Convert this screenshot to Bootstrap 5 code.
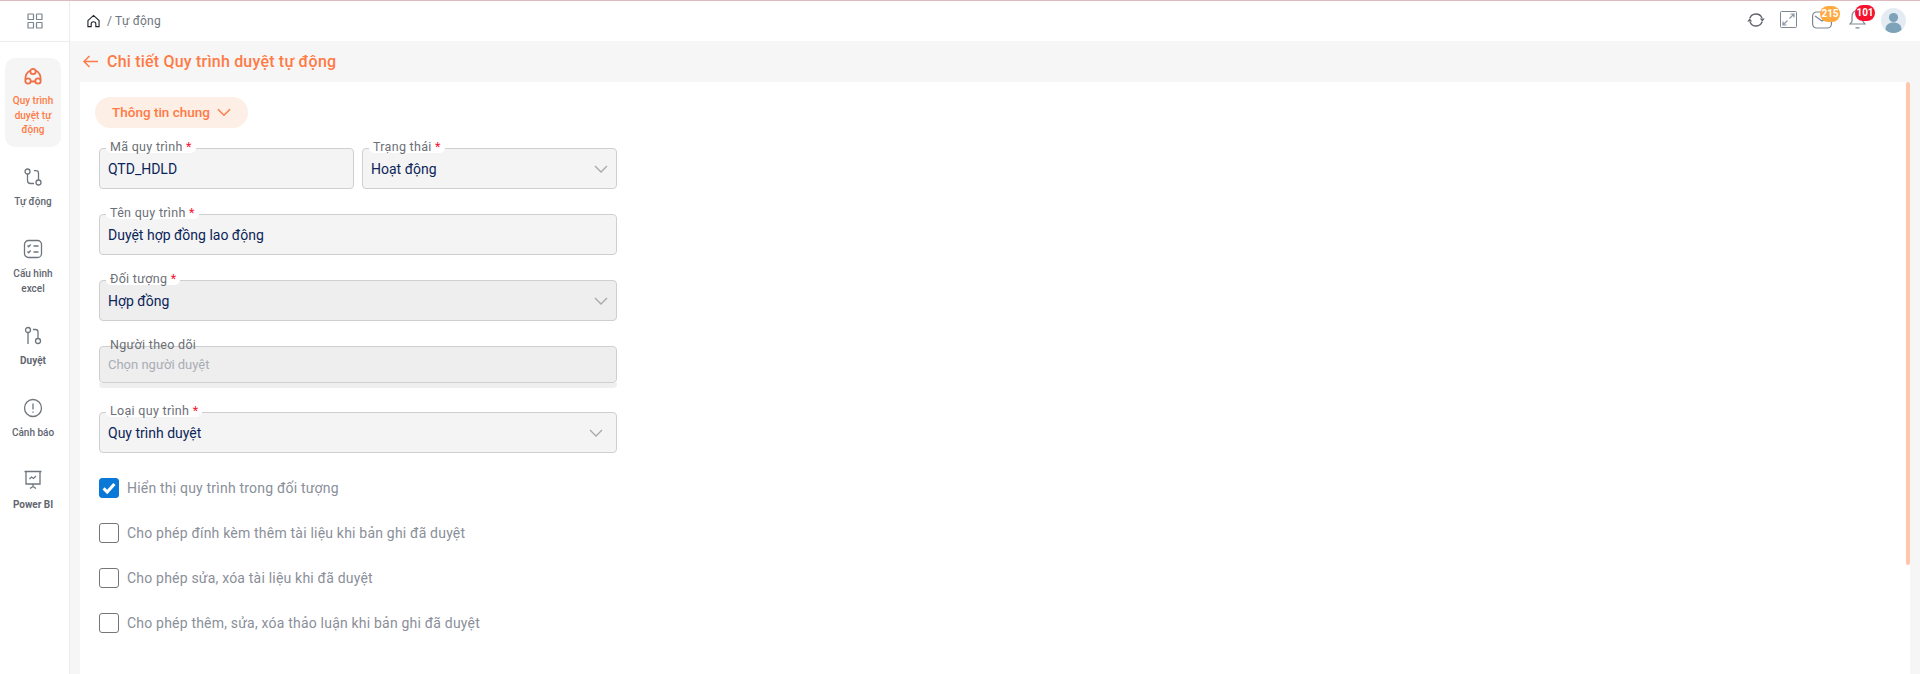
<!DOCTYPE html>
<html lang="vi">
<head>
<meta charset="utf-8">
<title>Chi tiết Quy trình duyệt tự động</title>
<link href="https://cdn.jsdelivr.net/npm/bootstrap@5.3.0/dist/css/bootstrap.min.css" rel="stylesheet">
<style>
html,body{height:674px;overflow:hidden}
body{font-family:Roboto,"Liberation Sans",sans-serif;font-size:14px;background:#fff;border-top:1px solid #dcbcc0}
.app-shell{height:673px}
.side-rail{width:70px;flex:none;border-right:1px solid #ececec;background:#fff}
.rail-top{height:41px;flex:none;border-bottom:1px solid #ececec}
.rail-nav{padding:16px 8px 0 5px;gap:12px}
.rail-item{width:56px;padding:8px 0 9.5px;border-radius:10px;color:#5f6670;font-size:10px;line-height:14.5px;font-weight:500;text-align:center;text-decoration:none}
.rail-item svg{display:block;width:20px;height:20px;margin-bottom:8px}
.rail-item.on{background:#f5f5f5;color:#ff7a45}
.rail-item .strong-lbl{font-weight:700}
.top-strip{height:40px;flex:none;padding:0 14px 3px 17px}
.crumb{font-size:12px;color:#6f7680;letter-spacing:.2px;gap:7px;margin-top:3px}
.head-icon{display:block;color:#6e7a86}
.icon-wrap{position:relative;display:block}
.gap-a{margin-left:15px}
.gap-b{margin-left:17px}
.count-pill{position:absolute;height:16px;min-width:20px;border-radius:8px;color:#fff;font-size:10px;font-weight:700;line-height:16px;text-align:center}
.pill-mail{background:#ffa940;left:8px;top:-5px}
.pill-bell{background:#f5122e;left:6px;top:-4px}
.avatar-dot{width:25px;height:25px;border-radius:50%;background:#e4ebf2;overflow:hidden;margin-top:2px}
.work-area{background:#f6f6f6;min-width:0}
.title-strip{height:41px;flex:none;padding:0 0 0 13px;color:#ff7a45;font-size:16px;font-weight:500;gap:9px;letter-spacing:.2px}
.sheet{background:#fff;margin:0 10px;position:relative;padding:15px 0 0 15px}
.scroll-thumb{position:absolute;right:0;top:0;width:4px;height:483px;border-radius:2px;background:#ffc6ab}
.group-pill{width:153px;height:31px;border-radius:16px;background:#fdeee6;color:#ff7a45;font-size:13.5px;font-weight:500;gap:7px}
.form-col{width:518px;margin:20px 0 0 4px}
.field-row{gap:8px;margin-bottom:25px}
.float-field{position:relative;flex:1 1 0;min-width:0}
.float-field .form-control,.float-field .form-select{height:41px;border:1px solid #cfcfcf;border-radius:4px;background-color:#f4f4f4;color:#0b2559;font-size:14px;padding:1px 8px 0 8px;box-shadow:none}
.float-field .form-select{background-position:right 7px center;background-size:16px 12px;background-image:url("data:image/svg+xml,%3csvg xmlns='http://www.w3.org/2000/svg' viewBox='0 0 16 12'%3e%3cpath fill='none' stroke='%23a8a8a8' stroke-width='1.3' d='M2 3l6 6 6-6'/%3e%3c/svg%3e")}
.float-field .form-select.far-in{background-position:right 12px center}
.float-field .form-control.dim,.float-field .form-select.dim{background-color:#eeeeee;opacity:1}
.float-field .form-control.short{height:37px;padding-top:0;font-size:13px}
.float-field .form-control.short::placeholder{color:#a8adb5}
.under-shadow{height:5px;margin-bottom:24px;background:#efefef;border-radius:0 0 4px 4px}
.float-label{position:absolute;left:7px;top:-7px;padding:0 4px;height:12px;line-height:12px;font-size:12.5px;letter-spacing:.3px;color:#6b6f76;background:#fff;border-radius:0 0 5px 5px;margin:0}
.float-label.flat{background:linear-gradient(#fff 7px,transparent 7px)}
.req{color:#f5122e}
.opt-row{height:45px;margin:0;padding:0;min-height:0;gap:8px}
.opt-row .form-check-input{float:none;width:20px;height:20px;margin:0;border:1px solid #767676;border-radius:3px;flex:none;box-shadow:none;opacity:1}
.opt-row .form-check-input:checked{background-color:#0a78d6;border-color:#0a78d6;background-image:url("data:image/svg+xml,%3csvg xmlns='http://www.w3.org/2000/svg' viewBox='0 0 20 20'%3e%3cpath fill='none' stroke='%23fff' stroke-width='3.4' d='M4 10.500l4 4 8-9'/%3e%3c/svg%3e")}
.opt-row .form-check-label{color:#8a8f99;font-size:14px;letter-spacing:.2px}
</style>
</head>
<body>
<div class="app-shell d-flex">
  <aside class="side-rail d-flex flex-column">
    <div class="rail-top d-flex align-items-center justify-content-center">
      <svg width="16" height="16" viewBox="0 0 16 16" fill="none" stroke="#7b838c" stroke-width="1.2"><rect x="1" y="1" width="5.5" height="5.5" rx=".6"/><rect x="9.5" y="1" width="5.5" height="5.5" rx=".6"/><rect x="1" y="9.5" width="5.5" height="5.5" rx=".6"/><rect x="9.5" y="9.5" width="5.5" height="5.5" rx=".6"/></svg>
    </div>
    <nav class="rail-nav d-flex flex-column">
      <a class="rail-item on d-flex flex-column align-items-center" href="#">
        <svg viewBox="0 0 20 20" fill="none" stroke="#ef7048" stroke-width="1.800"><circle cx="10" cy="5.500" r="2.700"/><circle cx="5" cy="15" r="2.700"/><circle cx="15" cy="15" r="2.700"/><path d="M7.500 4.500C4.200 6 2.300 9 2.300 13.500M12.500 4.500c3.300 1.500 5.200 4.500 5.200 9M7.700 15.500h4.600"/></svg>
        <span>Quy trình duyệt tự động</span>
      </a>
      <a class="rail-item d-flex flex-column align-items-center" href="#">
        <svg viewBox="0 0 20 20" fill="none" stroke="#6e757d" stroke-width="1.3"><circle cx="4.5" cy="4.5" r="2.5"/><circle cx="15.5" cy="15.5" r="2.5"/><path d="M4.5 7v6.5c0 2 1.2 3 3 3h3.5M15.500 13V6c0-1.500-.8-2.300-2.300-2.300H11"/></svg>
        <span>Tự động</span>
      </a>
      <a class="rail-item d-flex flex-column align-items-center" href="#">
        <svg viewBox="0 0 20 20" fill="none" stroke="#6e757d" stroke-width="1.3"><rect x="1.500" y="1.500" width="17" height="17" rx="4"/><path d="M4.500 6.500l1.200 1.200 2-2.200M4.500 12.500l1.200 1.200 2-2.200M10.500 7h5M10.500 13h5"/></svg>
        <span>Cấu hình excel</span>
      </a>
      <a class="rail-item d-flex flex-column align-items-center" href="#">
        <svg viewBox="0 0 20 20" fill="none" stroke="#6e757d" stroke-width="1.3"><circle cx="5" cy="4" r="2.500"/><circle cx="15" cy="15" r="2.500"/><path d="M5 6.500V18M15 12.500V6c0-1.800-1-2.500-2.500-2.500H10"/></svg>
        <span class="strong-lbl">Duyệt</span>
      </a>
      <a class="rail-item d-flex flex-column align-items-center" href="#">
        <svg viewBox="0 0 20 20" fill="none" stroke="#6e757d" stroke-width="1.3"><circle cx="10" cy="10" r="8.500"/><path d="M10 5.500v6M10 13.500v1.300"/></svg>
        <span>Cảnh báo</span>
      </a>
      <a class="rail-item d-flex flex-column align-items-center" href="#">
        <svg viewBox="0 0 20 20" fill="none" stroke="#6e757d" stroke-width="1.3"><path d="M1.500 1.500h17M3 1.500v12.500h14V1.500M10 14v2.500M7 18.500l3-2 3 2M6.500 9l2-2 2 1.500 2.500-2.500"/></svg>
        <span class="strong-lbl">Power BI</span>
      </a>
    </nav>
  </aside>
  <div class="flex-grow-1 d-flex flex-column work-area">
    <header class="top-strip bg-white d-flex align-items-center justify-content-between">
      <div class="d-flex align-items-center crumb">
        <svg width="13" height="14" viewBox="0 0 14 14" fill="none" stroke="#1f2329" stroke-width="1.200"><path d="M1 6.500L7 1l6 5.500V13H9.500V10c0-3-5-3-5 0v3H1z"/></svg>
        <span>/ Tự động</span>
      </div>
      <div class="d-flex align-items-center">
        <svg class="head-icon" width="18" height="18" viewBox="0 0 18 18" fill="none" stroke="#5f646a" stroke-width="1.300"><path d="M2.800 7.500A6.500 6.500 0 0 1 15 7M15.200 10.500A6.500 6.500 0 0 1 3 11"/><path d="M12.800 7.500h5L15.300 10.500zM5.200 10.500h-5L2.700 7.500z" fill="#5f646a" stroke="none"/></svg>
        <svg class="head-icon gap-a" width="17" height="17" viewBox="0 0 17 17" fill="none" stroke="#7c8792" stroke-width="1"><rect x=".5" y=".5" width="16" height="16" rx="1"/><path d="M9.500 7.500L14 3M10.500 3H14V6.500M7.500 9.500L3 14M6.500 14H3V10.500" stroke="#8b97a3" stroke-width="1.200"/></svg>
        <span class="icon-wrap gap-a" style="width:20px;height:18px">
          <svg class="head-icon" width="20" height="18" viewBox="0 0 20 18" fill="none" stroke="#7c8792" stroke-width="1.200"><rect x=".6" y="1" width="18.800" height="16" rx="4"/><path d="M3 5l7 5 7-5"/></svg>
          <span class="count-pill pill-mail">215</span>
        </span>
        <span class="icon-wrap gap-b" style="width:17px;height:21px">
          <svg class="head-icon" width="17" height="21" viewBox="0 0 17 21" fill="none" stroke="#7c8792" stroke-width="1.200"><path d="M8.500 1.500C5 1.500 3 4 3 8v4.500l-2 2.500h15l-2-2.500V8c0-4-2-6.500-5.500-6.500zM6.500 18.800h4"/></svg>
          <span class="count-pill pill-bell">101</span>
        </span>
        <span class="avatar-dot gap-a d-block">
          <svg width="25" height="25" viewBox="0 0 25 25" class="d-block"><circle cx="12.500" cy="9.500" r="4.600" fill="#7ea3b8"/><path d="M4.500 22c0-5.500 3.500-7.500 8-7.500s8 2 8 7.500v3h-16z" fill="#7ea3b8"/></svg>
        </span>
      </div>
    </header>
    <div class="title-strip d-flex align-items-center">
      <svg width="15" height="13" viewBox="0 0 15 13" fill="none" stroke="#ff7a45" stroke-width="1.500"><path d="M15 6.500H1.500M6.500 1L1 6.500 6.500 12"/></svg>
      <span>Chi tiết Quy trình duyệt tự động</span>
    </div>
    <main class="sheet flex-grow-1">
      <div class="scroll-thumb"></div>
      <div class="group-pill d-flex align-items-center justify-content-center">
        <span>Thông tin chung</span>
        <svg width="14" height="9" viewBox="0 0 14 9" fill="none" stroke="#ff7a45" stroke-width="1.500"><path d="M1 1.200l6 6 6-6"/></svg>
      </div>
      <form class="form-col">
        <div class="field-row d-flex">
          <div class="float-field">
            <label class="float-label">Mã quy trình <span class="req">*</span></label>
            <input class="form-control" value="QTD_HDLD">
          </div>
          <div class="float-field">
            <label class="float-label">Trạng thái <span class="req">*</span></label>
            <select class="form-select"><option>Hoạt động</option></select>
          </div>
        </div>
        <div class="field-row d-flex">
          <div class="float-field">
            <label class="float-label">Tên quy trình <span class="req">*</span></label>
            <input class="form-control" value="Duyệt hợp đồng lao động">
          </div>
        </div>
        <div class="field-row d-flex">
          <div class="float-field">
            <label class="float-label">Đối tượng <span class="req">*</span></label>
            <select class="form-select dim"><option>Hợp đồng</option></select>
          </div>
        </div>
        <div class="d-flex">
          <div class="float-field">
            <label class="float-label flat">Người theo dõi</label>
            <input class="form-control dim short" placeholder="Chọn người duyệt">
          </div>
        </div>
        <div class="under-shadow"></div>
        <div class="field-row d-flex">
          <div class="float-field">
            <label class="float-label">Loại quy trình <span class="req">*</span></label>
            <select class="form-select far-in"><option>Quy trình duyệt</option></select>
          </div>
        </div>
        <div>
          <div class="form-check opt-row d-flex align-items-start">
            <input class="form-check-input" type="checkbox" id="o1" checked>
            <label class="form-check-label" for="o1">Hiển thị quy trình trong đối tượng</label>
          </div>
          <div class="form-check opt-row d-flex align-items-start">
            <input class="form-check-input" type="checkbox" id="o2">
            <label class="form-check-label" for="o2">Cho phép đính kèm thêm tài liệu khi bản ghi đã duyệt</label>
          </div>
          <div class="form-check opt-row d-flex align-items-start">
            <input class="form-check-input" type="checkbox" id="o3">
            <label class="form-check-label" for="o3">Cho phép sửa, xóa tài liệu khi đã duyệt</label>
          </div>
          <div class="form-check opt-row d-flex align-items-start">
            <input class="form-check-input" type="checkbox" id="o4">
            <label class="form-check-label" for="o4">Cho phép thêm, sửa, xóa thảo luận khi bản ghi đã duyệt</label>
          </div>
        </div>
      </form>
    </main>
  </div>
</div>
<script src="https://cdn.jsdelivr.net/npm/bootstrap@5.3.0/dist/js/bootstrap.bundle.min.js"></script>
</body>
</html>
